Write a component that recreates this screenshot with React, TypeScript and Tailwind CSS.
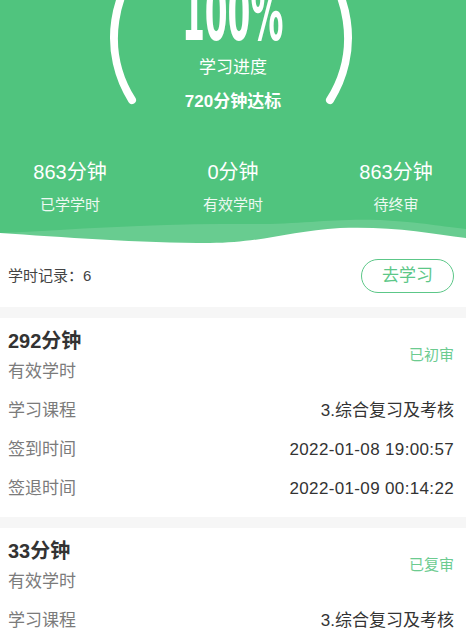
import React from "react";

const records = [
  {
    minutes: "292分钟",
    status: "已初审",
    course: "3.综合复习及考核",
    signIn: "2022-01-08 19:00:57",
    signOut: "2022-01-09 00:14:22",
  },
  {
    minutes: "33分钟",
    status: "已复审",
    course: "3.综合复习及考核",
    signIn: "2022-01-09 08:12:40",
    signOut: "2022-01-09 08:45:51",
  },
];

const stats = [
  { value: "863分钟", label: "已学学时" },
  { value: "0分钟", label: "有效学时" },
  { value: "863分钟", label: "待终审" },
];

const font = { fontFamily: '"Liberation Sans", "Noto Sans CJK SC", sans-serif' };

const Header = () => (
  <div className="relative h-[245px] overflow-hidden bg-[#50c47e] text-white">
    {/* progress ring */}
    <svg className="absolute left-0 top-0 h-[120px] w-full" viewBox="0 0 466 120">
      <path
        d="M 132 100 A 117 117 0 1 1 330 100"
        fill="none"
        stroke="#fff"
        strokeWidth="8"
        strokeLinecap="round"
      />
    </svg>

    <div className="relative flex flex-col items-center">
      <div
        className="mt-[-24px] h-[76px] origin-center scale-x-[0.48] text-[76px] font-bold leading-[76px]"
        style={{ fontFamily: '"DejaVu Sans Condensed", "Liberation Sans", sans-serif' }}
      >
        100%
      </div>
      <div className="mt-[4px] text-[17px] leading-[24px]">学习进度</div>
      <div className="mt-[10px] text-[17px] font-bold leading-[24px]">720分钟达标</div>

      <div className="mt-[44px] flex w-full justify-between px-[32px]">
        {stats.map((s, i) => (
          <div key={i} className="flex w-[76px] flex-col items-center">
            <div className="whitespace-nowrap text-[20px] leading-[28px]">{s.value}</div>
            <div className="mt-[8px] whitespace-nowrap text-[15px] leading-[22px] text-white/90">{s.label}</div>
          </div>
        ))}
      </div>
    </div>

    {/* wave */}
    <svg className="absolute bottom-0 left-0 h-[30px] w-full" viewBox="0 0 466 30" preserveAspectRatio="none">
      <path
        d="M0,18 C80,14 160,8 240,9 C300,10 330,3 380,5 C420,7 445,12 466,14 L466,30 L0,30 Z"
        fill="#fff"
        fillOpacity="0.14"
      />
      <path
        d="M0,18 C60,22 140,28 210,28 C260,28 290,16 340,13 C390,11 430,18 466,23 L466,30 L0,30 Z"
        fill="#fff"
      />
    </svg>
  </div>
);

const Row = ({ label, value, wide }: { label: string; value: string; wide?: boolean }) => (
  <div className="flex h-[39px] items-center justify-between">
    <span className="text-[17px] text-[#7b7b7b]">{label}</span>
    <span className={`text-[17px] text-[#333] ${wide ? "tracking-[0.35px]" : ""}`}>{value}</span>
  </div>
);

export default function App() {
  return (
    <div className="min-h-screen w-full bg-white" style={font}>
      <Header />

      <div className="flex h-[62px] items-center justify-between pl-2 pr-3">
        <span className="text-[15px] text-[#444]">学时记录：6</span>
        <button className="flex h-[34px] w-[93px] items-center justify-center rounded-full border border-[#5cc788] text-[17px] text-[#5cc788]">
          去学习
        </button>
      </div>

      {records.map((r, i) => (
        <div key={i}>
          <div className="h-[11px] bg-[#f6f6f6]" />
          <div className="pb-[9px] pl-2 pr-3 pt-[9px]">
            <div className="flex items-center justify-between">
              <div className="flex flex-col">
                <span className="text-[20px] font-bold leading-[28px] text-[#333]">{r.minutes}</span>
                <span className="mt-[5px] text-[17px] leading-[24px] text-[#7b7b7b]">有效学时</span>
              </div>
              <span className="text-[15px] text-[#6ccb90]">{r.status}</span>
            </div>
            <div className="mt-[7px]">
              <Row label="学习课程" value={r.course} />
              <Row label="签到时间" value={r.signIn} wide />
              <Row label="签退时间" value={r.signOut} wide />
            </div>
          </div>
        </div>
      ))}
    </div>
  );
}
